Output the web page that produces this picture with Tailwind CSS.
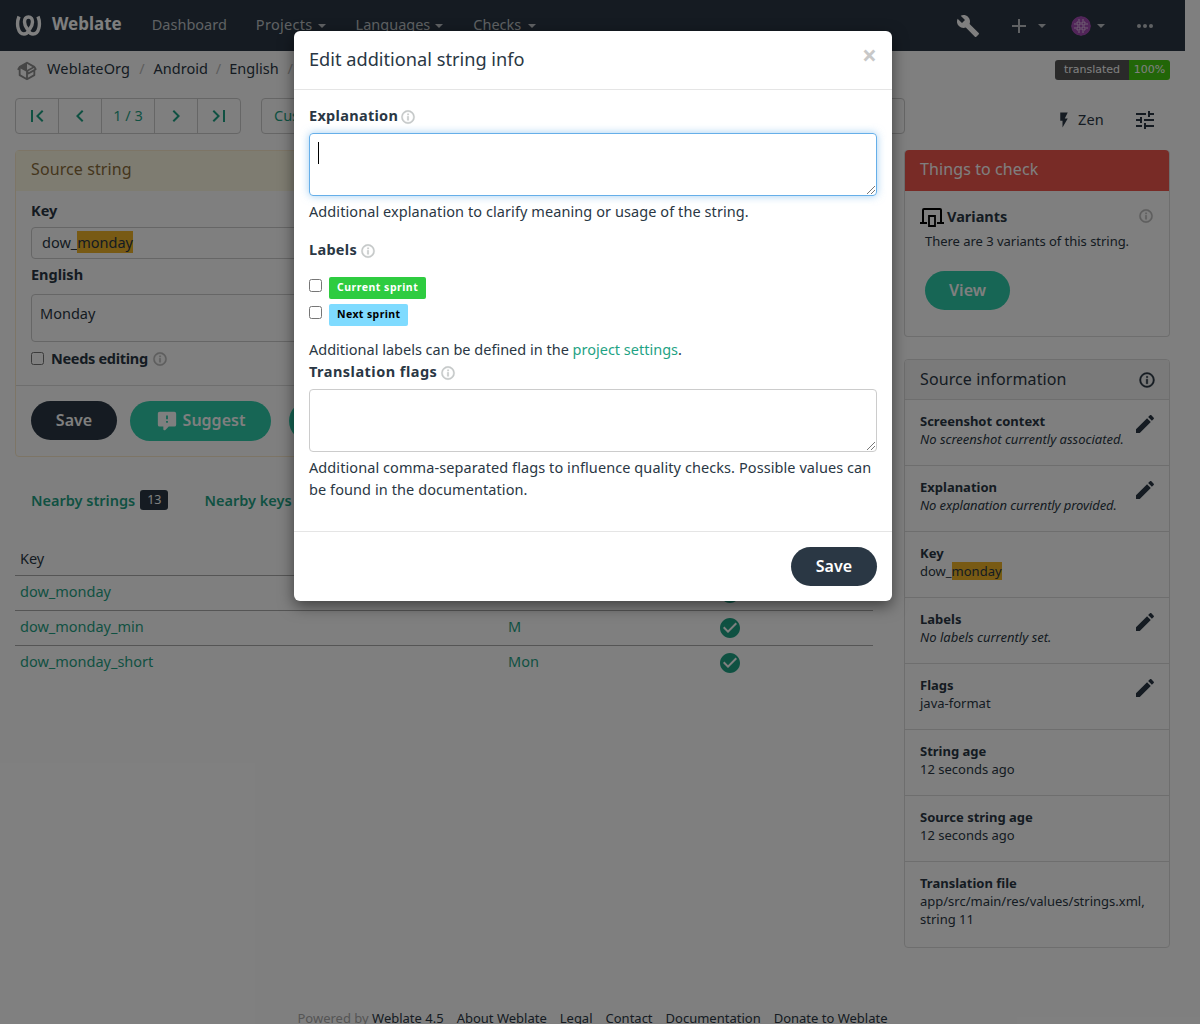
<!DOCTYPE html>
<html><head><meta charset="utf-8"><title>Weblate</title>
<script src="https://cdn.jsdelivr.net/npm/@tailwindcss/browser@4"></script></head>
<body class="overflow-hidden bg-white">
<div class="relative h-[1024px] w-[1200px] overflow-hidden font-['Noto_Sans',sans-serif] text-[14.5px] leading-[22px] text-[#2a3744]">
  <!-- page -->
  <div class="w-[1185px]">
    <nav class="flex h-[51px] items-center bg-[#2a3744] pl-[15px] pr-[28px] text-[#bfc3c7]">
      <svg class="h-[21px] w-[27px]" viewBox="0 0 27 21" fill="none" stroke="#fff" stroke-width="3.4"><path d="M4 1.500C1 9 3 19 9 19C11 19 12.500 18 13.500 16C15 13 17.500 11 17.500 7C17.500 4 16 2 13.500 2C11 2 9.500 4 9.500 7C9.500 11 12 13 13.500 16C14.500 18 16 19 18 19C24 19 26 9 23 1.500"/></svg>
      <span class="ml-[10px] pb-1 text-[17px] font-bold text-white">Weblate</span>
      <span class="ml-[30px] pb-1">Dashboard</span>
      <span class="ml-[29px] pb-1 tracking-[0.3px]">Projects</span><i class="ml-[5px] border-x-4 border-t-4 border-x-transparent border-t-[#bfc3c7]"></i>
      <span class="ml-[30px] pb-1">Languages</span><i class="ml-[5px] border-x-4 border-t-4 border-x-transparent border-t-[#bfc3c7]"></i>
      <span class="ml-[30px] pb-1">Checks</span><i class="ml-[7px] border-x-4 border-t-4 border-x-transparent border-t-[#bfc3c7]"></i>
      <svg class="ml-auto h-6 w-6" viewBox="0 0 24 24" fill="#fff"><path d="M22.7,19L13.6,9.900C14.500,7.600 14,4.900 12.100,3C10.100,1 7.100,0.600 4.700,1.700L9,6L6,9L1.600,4.700C0.400,7.100 0.900,10.100 2.900,12.100C4.800,14 7.500,14.500 9.800,13.600L18.900,22.700C19.300,23.100 19.900,23.100 20.300,22.700L22.600,20.400C23.100,20 23.100,19.300 22.700,19Z"/></svg>
      <svg class="ml-[27px] h-6 w-6" viewBox="0 0 24 24" fill="#bfc3c7"><path d="M19,13H13V19H11V13H5V11H11V5H13V11H19V13Z"/></svg>
      <i class="ml-[7px] border-x-4 border-t-4 border-x-transparent border-t-[#bfc3c7]"></i>
      <svg class="ml-[25px] h-5 w-5 rounded-full" viewBox="0 0 20 20"><circle cx="10" cy="10" r="10" fill="#a24bb3"/><path d="M6 6h3v3H6zM11 6h3v3h-3zM6 11h3v3H6zM11 11h3v3h-3zM3 8h2M3 12h2M15 8h2M15 12h2M8 3v2M12 3v2M8 15v2M12 15v2" fill="none" stroke="#e3c4e8" stroke-width="1"/></svg>
      <i class="ml-[6px] border-x-4 border-t-4 border-x-transparent border-t-[#bfc3c7]"></i>
      <svg class="ml-[28px] h-6 w-6" viewBox="0 0 24 24" fill="#bfc3c7"><path d="M16,12A2,2 0 0,1 18,10A2,2 0 0,1 20,12A2,2 0 0,1 18,14A2,2 0 0,1 16,12M10,12A2,2 0 0,1 12,10A2,2 0 0,1 14,12A2,2 0 0,1 12,14A2,2 0 0,1 10,12M4,12A2,2 0 0,1 6,10A2,2 0 0,1 8,12A2,2 0 0,1 6,14A2,2 0 0,1 4,12Z"/></svg>
    </nav>
    <div class="flex h-[37px] items-center pl-[16px] pr-[15px]">
      <svg class="mt-[2px] h-[22px] w-[22px]" viewBox="0 0 24 24" fill="#8d8d8d"><path d="M2,10.960C1.500,10.680 1.350,10.070 1.630,9.590L3.130,7C3.240,6.800 3.410,6.660 3.600,6.580L11.430,2.180C11.590,2.060 11.790,2 12,2C12.210,2 12.410,2.060 12.570,2.180L20.470,6.620C20.660,6.720 20.820,6.880 20.910,7.080L22.360,9.600C22.640,10.080 22.470,10.690 22,10.960L21,11.540V16.500C21,16.880 20.790,17.210 20.470,17.380L12.570,21.820C12.410,21.940 12.210,22 12,22C11.790,22 11.590,21.940 11.430,21.820L3.530,17.380C3.210,17.210 3,16.880 3,16.500V10.960C2.700,11.130 2.320,11.140 2,10.960M12,4.150V4.150L12,10.850V10.850L17.960,7.500L12,4.150M5,15.910L11,19.290V12.580L5,9.210V15.910M19,15.910V12.690L14,15.590C13.670,15.770 13.280,15.760 13,15.600V19.290L19,15.910M13.850,13.360L20.130,9.730L19.550,8.720L13.270,12.350L13.850,13.360Z"/></svg>
      <span class="ml-[9px] pb-1 tracking-[0.15px]">WeblateOrg</span><span class="mx-[9px] pb-1 text-[#bbb]">/</span><span class="pb-1">Android</span><span class="mx-[8px] pb-1 text-[#bbb]">/</span><span class="pb-1">English</span><span class="mx-[9px] pb-1 text-[#bbb]">/</span>
      <div class="ml-auto flex h-5 overflow-hidden rounded-[3px] font-['DejaVu_Sans',sans-serif] text-[11px] leading-5 text-white">
        <span class="w-[74px] bg-[#555] text-center">translated</span><span class="w-[41px] bg-[#4c1] text-center">100%</span>
      </div>
    </div>
    <div class="mt-[10px] flex h-[36px] pl-[15px] pr-[15px]">
      <div class="flex h-9 w-[226px] rounded border border-[#ccc] text-[#1fa385]">
        <span class="flex w-[42px] items-center justify-center"><svg class="h-6 w-6" viewBox="0 0 24 24" fill="#1fa385"><path d="M18.410,16.590L13.820,12L18.410,7.410L17,6L11,12L17,18L18.410,16.590M6,6H8V18H6V6Z"/></svg></span>
        <span class="flex w-[43px] items-center justify-center border-l border-[#ccc]"><svg class="h-6 w-6" viewBox="0 0 24 24" fill="#1fa385"><path d="M15.410,16.580L10.830,12L15.410,7.410L14,6L8,12L14,18L15.410,16.580Z"/></svg></span>
        <span class="flex w-[53px] items-center justify-center border-l border-[#ccc] pb-[2px]">1 / 3</span>
        <span class="flex w-[43px] items-center justify-center border-l border-[#ccc]"><svg class="h-6 w-6" viewBox="0 0 24 24" fill="#1fa385"><path d="M8.590,16.580L13.170,12L8.590,7.410L10,6L16,12L10,18L8.590,16.580Z"/></svg></span>
        <span class="flex flex-1 items-center justify-center border-l border-[#ccc]"><svg class="h-6 w-6" viewBox="0 0 24 24" fill="#1fa385"><path d="M5.590,7.410L10.180,12L5.590,16.590L7,18L13,12L7,6L5.590,7.410M16,6H18V18H16V6Z"/></svg></span>
      </div>
      <div class="ml-5 flex h-9 w-[644px] items-center rounded border border-[#ccc] pl-3 pb-[2px] text-[#1fa385]">Custom</div>
      <div class="ml-auto flex items-center pt-2">
        <svg class="h-[18px] w-[18px]" viewBox="0 0 24 24" fill="#2a3744"><path d="M7,2V13H10V22L17,10H13L17,2H7Z"/></svg>
        <span class="ml-[5px] pb-[3px] tracking-[0.2px]">Zen</span>
        <svg class="ml-[29px] mr-[13px] h-6 w-6" viewBox="0 0 24 24" fill="#2a3744"><path d="M3,17V19H9V17H3M3,5V7H13V5H3M13,21V19H21V17H13V15H11V21H13M7,9V11H3V13H7V15H9V9H7M21,13V11H11V13H21M15,9H17V7H21V5H17V3H15V9Z"/></svg>
      </div>
    </div>
    <div class="mt-4 flex pl-[15px] pr-[15px]">
      <!-- left column -->
      <div class="w-[858px]">
        <section class="h-[307px] rounded border border-[#faebcc]">
          <div class="flex h-10 items-center bg-[#fcf8e3] px-[15px] pb-1 text-[16px] tracking-[0.1px] text-[#8a6d3b]">Source string</div>
          <div class="px-[15px] pt-[8px]">
            <div class="font-bold">Key</div>
            <div class="mt-[6px] flex h-8 items-center rounded border border-[#ccc] px-[10px] pb-[2px]"><span>dow_</span><span class="bg-[#f0b429]">monday</span></div>
            <div class="mt-1 font-bold">English</div>
            <div class="mt-[9px] h-[48px] rounded border border-[#ccc] px-[8px] pt-[7px]">Monday</div>
            <div class="mt-[5px] flex items-center">
              <input type="checkbox" class="h-[13px] w-[13px]"><span class="ml-[7px] font-bold tracking-[-0.3px]">Needs editing</span>
              <svg class="ml-1 mt-[2px] h-4 w-4" viewBox="0 0 24 24" fill="#bbb" stroke="#bbb" stroke-width="0.6"><path d="M11,9H13V7H11M12,20C7.590,20 4,16.410 4,12C4,7.590 7.590,4 12,4C16.410,4 20,7.590 20,12C20,16.410 16.410,20 12,20M12,2A10,10 0 0,0 2,12A10,10 0 0,0 12,22A10,10 0 0,0 22,12A10,10 0 0,0 12,2M11,17H13V11H11V17Z"/></svg>
            </div>
          </div>
          <div class="mt-[16px] flex border-t border-[#ddd] px-[15px] pt-[15px]">
            <span class="flex h-[39px] w-[86px] items-center justify-center rounded-full bg-[#2a3744] pb-[2px] text-[16px] font-semibold text-white">Save</span>
            <span class="ml-[13px] flex h-10 w-[141px] items-center justify-center rounded-full bg-[#2eccaa] text-[16px] font-semibold text-white"><svg class="mr-[5px] h-[22px] w-[22px]" viewBox="0 0 24 24" fill="#fff"><path d="M9,22A1,1 0 0,1 8,21V18H4A2,2 0 0,1 2,16V4C2,2.890 2.900,2 4,2H20A2,2 0 0,1 22,4V16A2,2 0 0,1 20,18H13.900L10.200,21.710C10,21.900 9.750,22 9.500,22V22H9M13,10V6H11V10H13M13,14V12H11V14H13Z"/></svg><span class="pb-[2px]">Suggest</span></span>
            <span class="ml-[18px] h-10 w-[100px] rounded-full bg-[#2eccaa]"></span>
          </div>
        </section>
        <div class="mt-[31px] flex h-6 items-center pl-4 font-semibold text-[#1fa385]">
          <span>Nearby strings</span><span class="ml-[5px] rounded-[3px] bg-[#2a3744] px-[7px] text-[12.500px] leading-5 font-normal text-white">13</span><span class="ml-[36px]">Nearby keys</span>
        </div>
        <div class="mt-[30px]">
          <div class="flex h-[34px] items-center border-b border-[#aaa] pb-px pl-[5px]">Key</div>
          <div class="flex h-[35px] items-center border-b border-[#aaa] pb-[5px] pl-[5px] text-[#1fa385]"><span class="w-[488px]">dow_monday</span><span class="w-[210px]">Monday</span><svg class="mt-1 h-6 w-6" viewBox="0 0 24 24" fill="#1fa385"><path d="M12 2C6.500 2 2 6.500 2 12S6.500 22 12 22 22 17.500 22 12 17.500 2 12 2M10 17L5 12L6.410 10.590L10 14.170L17.590 6.580L19 8L10 17Z"/></svg></div>
          <div class="flex h-[35px] items-center border-b border-[#aaa] pb-[5px] pl-[5px] text-[#1fa385]"><span class="w-[488px]">dow_monday_min</span><span class="w-[210px]">M</span><svg class="mt-1 h-6 w-6" viewBox="0 0 24 24" fill="#1fa385"><path d="M12 2C6.500 2 2 6.500 2 12S6.500 22 12 22 22 17.500 22 12 17.500 2 12 2M10 17L5 12L6.410 10.590L10 14.170L17.590 6.580L19 8L10 17Z"/></svg></div>
          <div class="flex h-[35px] items-center pb-[5px] pl-[5px] text-[#1fa385]"><span class="w-[488px]">dow_monday_short</span><span class="w-[210px]">Mon</span><svg class="mt-1 h-6 w-6" viewBox="0 0 24 24" fill="#1fa385"><path d="M12 2C6.500 2 2 6.500 2 12S6.500 22 12 22 22 17.500 22 12 17.500 2 12 2M10 17L5 12L6.410 10.590L10 14.170L17.590 6.580L19 8L10 17Z"/></svg></div>
        </div>
      </div>
      <!-- right column -->
      <div class="ml-[31px] w-[266px]">
        <section class="h-[187px] rounded border border-t-0 border-[#ddd]">
          <div class="flex h-[41px] items-center rounded-t bg-[#f0564d] px-[15px] pb-[3px] text-[16px] tracking-[0.1px] text-white">Things to check</div>
          <div class="px-[15px] pt-[13px]">
            <div class="flex items-center font-bold">
              <svg class="h-6 w-6" viewBox="0 0 24 24" fill="none" stroke="#000" stroke-width="2"><path d="M3 18V6a1 1 0 0 1 1-1h16a1 1 0 0 1 1 1v12M0 19h7M17 19h7"/><path d="M9 12h6v10H9z" stroke-width="1.800"/></svg>
              <span class="ml-[3px] pb-px">Variants</span>
              <svg class="ml-auto h-4 w-4" viewBox="0 0 24 24" fill="#bbb" stroke="#bbb" stroke-width="0.6"><path d="M11,9H13V7H11M12,20C7.590,20 4,16.410 4,12C4,7.590 7.590,4 12,4C16.410,4 20,7.590 20,12C20,16.410 16.410,20 12,20M12,2A10,10 0 0,0 2,12A10,10 0 0,0 12,22A10,10 0 0,0 22,12A10,10 0 0,0 12,2M11,17H13V11H11V17Z"/></svg>
            </div>
            <div class="mt-[2px] pl-[5px] text-[13px] tracking-[-0.03px]">There are 3 variants of this string.</div>
            <div class="ml-[5px] mt-[19px] flex h-[39px] w-[85px] items-center justify-center rounded-full bg-[#2eccaa] pb-[2px] text-[16px] font-semibold text-white">View</div>
          </div>
        </section>
        <section class="mt-[22px] rounded border border-[#ddd]">
          <div class="flex h-10 items-center justify-between rounded-t-[3px] border-b border-[#ddd] bg-[#f5f5f5] pl-[15px] pr-[13px] text-[16px]"><span class="pb-[2px] tracking-[0.1px]">Source information</span>
            <svg class="h-[18px] w-[18px]" viewBox="0 0 24 24" fill="#2a3744" stroke="#2a3744" stroke-width="0.6"><path d="M11,9H13V7H11M12,20C7.590,20 4,16.410 4,12C4,7.590 7.590,4 12,4C16.410,4 20,7.590 20,12C20,16.410 16.410,20 12,20M12,2A10,10 0 0,0 2,12A10,10 0 0,0 12,22A10,10 0 0,0 22,12A10,10 0 0,0 12,2M11,17H13V11H11V17Z"/></svg>
          </div>
          <div class="flex h-[66px] justify-between border-b border-[#ddd] pl-[15px] pr-[12px] pt-[12px] text-[13px] leading-[18px]"><div><b class="block">Screenshot context</b><i>No screenshot currently associated.</i></div><svg class="h-6 w-6" viewBox="0 0 24 24" fill="#2a3744"><path d="M20.710,7.040C21.100,6.650 21.100,6 20.710,5.630L18.370,3.290C18,2.900 17.350,2.900 16.960,3.290L15.120,5.120L18.870,8.870M3,17.250V21H6.750L17.810,9.930L14.060,6.180L3,17.250Z"/></svg></div>
          <div class="flex h-[66px] justify-between border-b border-[#ddd] pl-[15px] pr-[12px] pt-[12px] text-[13px] leading-[18px]"><div><b class="block">Explanation</b><i class="tracking-[-0.1px]">No explanation currently provided.</i></div><svg class="h-6 w-6" viewBox="0 0 24 24" fill="#2a3744"><path d="M20.710,7.040C21.100,6.650 21.100,6 20.710,5.630L18.370,3.290C18,2.900 17.350,2.900 16.960,3.290L15.120,5.120L18.870,8.870M3,17.250V21H6.750L17.810,9.930L14.060,6.180L3,17.250Z"/></svg></div>
          <div class="h-[66px] border-b border-[#ddd] pl-[15px] pt-[12px] text-[13px] leading-[18px]"><b class="block">Key</b><span>dow_</span><span class="bg-[#f0b429]">monday</span></div>
          <div class="flex h-[66px] justify-between border-b border-[#ddd] pl-[15px] pr-[12px] pt-[12px] text-[13px] leading-[18px]"><div><b class="block">Labels</b><i>No labels currently set.</i></div><svg class="h-6 w-6" viewBox="0 0 24 24" fill="#2a3744"><path d="M20.710,7.040C21.100,6.650 21.100,6 20.710,5.630L18.370,3.290C18,2.900 17.350,2.900 16.960,3.290L15.120,5.120L18.870,8.870M3,17.250V21H6.750L17.810,9.930L14.060,6.180L3,17.250Z"/></svg></div>
          <div class="flex h-[66px] justify-between border-b border-[#ddd] pl-[15px] pr-[12px] pt-[12px] text-[13px] leading-[18px]"><div><b class="block">Flags</b>java-format</div><svg class="h-6 w-6" viewBox="0 0 24 24" fill="#2a3744"><path d="M20.710,7.040C21.100,6.650 21.100,6 20.710,5.630L18.370,3.290C18,2.900 17.350,2.900 16.960,3.290L15.120,5.120L18.870,8.870M3,17.250V21H6.750L17.810,9.930L14.060,6.180L3,17.250Z"/></svg></div>
          <div class="h-[66px] border-b border-[#ddd] pl-[15px] pt-[12px] text-[13px] leading-[18px]"><b class="block">String age</b>12 seconds ago</div>
          <div class="h-[66px] border-b border-[#ddd] pl-[15px] pt-[12px] text-[13px] leading-[18px]"><b class="block">Source string age</b>12 seconds ago</div>
          <div class="h-[85px] pl-[15px] pr-3 pt-[12px] text-[13px] leading-[18px]"><b class="block">Translation file</b>app/src/main/res/values/strings.xml, string 11</div>
        </section>
      </div>
    </div>
    <div class="mt-[60px] flex justify-center gap-[13px] text-[13px] leading-5"><span><span class="text-[#aaa]">Powered by</span> Weblate 4.5</span><span>About Weblate</span><span>Legal</span><span>Contact</span><span>Documentation</span><span>Donate to Weblate</span></div>
  </div>
  <!-- backdrop -->
  <div class="absolute inset-0 bg-black/50"></div>
  <!-- modal -->
  <div class="absolute left-[294px] top-[31px] flex h-[570px] w-[598px] flex-col rounded-md bg-white tracking-[0.08px] shadow-[0_5px_15px_rgba(0,0,0,0.5)]">
    <div class="flex h-[59px] items-center justify-between border-b border-[#e5e5e5] pl-[15px] pr-[15px]">
      <span class="pb-[2px] text-[18.200px] tracking-normal">Edit additional string info</span><span class="pb-[10px] text-[26px] font-bold leading-[26px] text-[#c8c8c8]">×</span>
    </div>
    <div class="flex-1 px-[15px] pt-[14px]">
      <div class="flex h-[22px] items-center font-bold tracking-[0.3px]">Explanation<svg class="ml-[2px] mt-[3px] h-4 w-4" viewBox="0 0 24 24" fill="#c4c8c8" stroke="#c4c8c8" stroke-width="0.6"><path d="M11,9H13V7H11M12,20C7.590,20 4,16.410 4,12C4,7.590 7.590,4 12,4C16.410,4 20,7.590 20,12C20,16.410 16.410,20 12,20M12,2A10,10 0 0,0 2,12A10,10 0 0,0 12,22A10,10 0 0,0 22,12A10,10 0 0,0 12,2M11,17H13V11H11V17Z"/></svg></div>
      <div class="relative mt-[7px] h-[63px] rounded border border-[#66afe9] shadow-[0_0_8px_rgba(102,175,233,0.6)]"><i class="absolute left-2 top-2 h-[22px] w-px bg-black"></i><svg class="absolute bottom-px right-px h-2 w-2" viewBox="0 0 8 8" stroke="#777"><path d="M0 8L8 0M4 8L8 4"/></svg></div>
      <div class="mt-[4px]">Additional explanation to clarify meaning or usage of the string.</div>
      <div class="mt-[16px] flex h-[22px] items-center font-bold tracking-[0.3px]">Labels<svg class="ml-[3px] mt-[3px] h-4 w-4" viewBox="0 0 24 24" fill="#c4c8c8" stroke="#c4c8c8" stroke-width="0.6"><path d="M11,9H13V7H11M12,20C7.590,20 4,16.410 4,12C4,7.590 7.590,4 12,4C16.410,4 20,7.590 20,12C20,16.410 16.410,20 12,20M12,2A10,10 0 0,0 2,12A10,10 0 0,0 12,22A10,10 0 0,0 22,12A10,10 0 0,0 12,2M11,17H13V11H11V17Z"/></svg></div>
      <div class="mt-[17px] flex h-[23px] items-start"><input type="checkbox" class="mt-[2px] h-[13px] w-[13px]"><span class="ml-[7px] rounded-[2px] bg-[#2ecc40] px-2 pb-px text-[10.500px] leading-[21px] font-bold tracking-[0.5px] text-white">Current sprint</span></div>
      <div class="mt-[4px] flex h-[23px] items-start"><input type="checkbox" class="mt-[2px] h-[13px] w-[13px]"><span class="ml-[7px] rounded-[2px] bg-[#7fdbff] px-2 pb-px text-[10.500px] leading-[21px] font-bold tracking-[0.4px] text-black">Next sprint</span></div>
      <div class="mt-[11px] tracking-normal">Additional labels can be defined in the <span class="text-[#1fa385]">project settings</span>.</div>
      <div class="flex h-[22px] items-center font-bold tracking-[0.48px]">Translation flags<svg class="ml-[3px] mt-[3px] h-4 w-4" viewBox="0 0 24 24" fill="#c4c8c8" stroke="#c4c8c8" stroke-width="0.6"><path d="M11,9H13V7H11M12,20C7.590,20 4,16.410 4,12C4,7.590 7.590,4 12,4C16.410,4 20,7.590 20,12C20,16.410 16.410,20 12,20M12,2A10,10 0 0,0 2,12A10,10 0 0,0 12,22A10,10 0 0,0 22,12A10,10 0 0,0 12,2M11,17H13V11H11V17Z"/></svg></div>
      <div class="relative mt-[7px] h-[63px] rounded border border-[#ccc]"><svg class="absolute bottom-px right-px h-2 w-2" viewBox="0 0 8 8" stroke="#777"><path d="M0 8L8 0M4 8L8 4"/></svg></div>
      <div class="mt-[4px]">Additional comma-separated flags to influence quality checks. Possible values can be found in the documentation.</div>
    </div>
    <div class="flex h-[70px] items-center justify-end border-t border-[#e5e5e5] px-[15px]">
      <span class="flex h-[39px] w-[86px] items-center justify-center rounded-full bg-[#2a3744] pb-[2px] text-[16px] font-semibold text-white">Save</span>
    </div>
  </div>
</div>
</body></html>
